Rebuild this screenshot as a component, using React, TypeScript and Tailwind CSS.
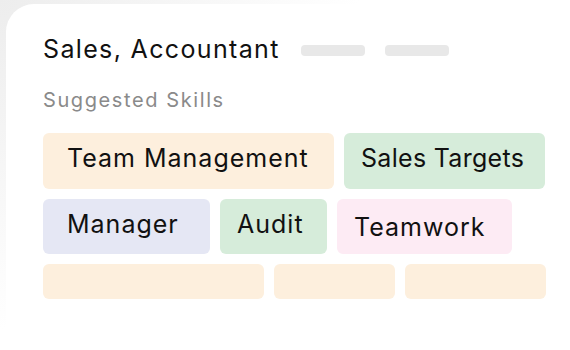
export default function App() {
  return (
    <div className="h-[350px] w-[570px] overflow-hidden bg-white bg-[radial-gradient(ellipse_360px_330px_at_0px_0px,#ededed,#ffffff)] pl-[6px] pt-[4px] font-['Inter',sans-serif]">
      <div className="h-[346px] w-[564px] rounded-tl-[28px] bg-white pl-[37px] pt-[29px]">
        <div className="flex items-center">
          <h1 className="text-[25px] leading-[32px] tracking-[1.35px] text-[#111]">Sales, Accountant</h1>
          <span className="ml-[21px] mt-[3px] h-[11px] w-[64px] rounded-[4px] bg-[#e8e8e8]" />
          <span className="ml-[20px] mt-[3px] h-[11px] w-[64px] rounded-[4px] bg-[#e8e8e8]" />
        </div>
        <p className="mt-[23px] text-[20px] leading-[24px] tracking-[1.6px] text-[#8a8a8a]">Suggested Skills</p>

        <div className="mt-[21px] flex flex-col gap-[10px] text-[25px] tracking-[1px] text-[#111]">
          <div className="flex gap-[10px]">
            <div className="flex h-[56px] w-[291px] items-center rounded-[6px] bg-[#fdefdd] pb-[4px] pl-[24px]">
              Team Management
            </div>
            <div className="flex h-[56px] w-[201px] items-center rounded-[6px] bg-[#d6ecda] pb-[4px] pl-[17px] tracking-[0.3px]">
              Sales Targets
            </div>
          </div>
          <div className="flex gap-[10px]">
            <div className="flex h-[55px] w-[167px] items-center rounded-[6px] bg-[#e5e7f4] pb-[4px] pl-[24px]">
              Manager
            </div>
            <div className="flex h-[55px] w-[107px] items-center rounded-[6px] bg-[#d6ecda] pb-[4px] pl-[17px]">
              Audit
            </div>
            <div className="flex h-[55px] w-[175px] items-center rounded-[6px] bg-[#fdebf4] pl-[17px] pt-[3px]">
              Teamwork
            </div>
          </div>
          <div className="flex gap-[10px]">
            <div className="h-[35px] w-[221px] rounded-[6px] bg-[#fdefdd]" />
            <div className="h-[35px] w-[121px] rounded-[6px] bg-[#fdefdd]" />
            <div className="h-[35px] w-[141px] rounded-[6px] bg-[#fdefdd]" />
          </div>
        </div>
      </div>
    </div>
  );
}
